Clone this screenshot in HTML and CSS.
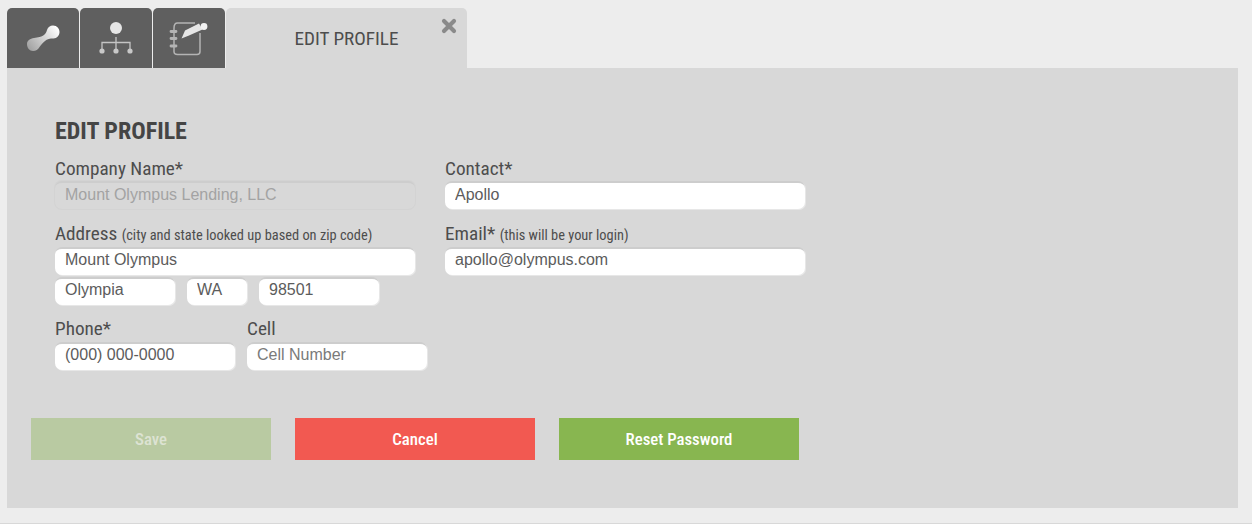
FILE: index.html
```html
<!DOCTYPE html>
<html lang="en">
<head>
    <meta charset="UTF-8">
    <title>Edit Profile</title>
    <link rel="stylesheet" href="styles.css">
</head>
<body>
    <div class="tabs">
        <div class="tab icon-tab">
            <svg width="72" height="60" viewBox="0 0 72 60">
                <defs>
                    <linearGradient id="blob" gradientUnits="userSpaceOnUse" x1="22" y1="42" x2="50" y2="20">
                        <stop offset="0" stop-color="#a0a0a0"/>
                        <stop offset="1" stop-color="#ffffff"/>
                    </linearGradient>
                </defs>
                <path d="M20 36 C20 32.500 23 30.500 27 30 C31 29.500 34.500 29 37 27 C39 25 39.500 24 40 22 C41 19 43 17.500 46 17.500 C50 17.500 52.500 20.500 52.500 24 C52.500 27.500 50 30.500 46.500 30.500 C43 30.500 40 31 38 33 C35.500 35 34 37 32.500 39 C31 41.500 29 43 26 43 C22.500 43 20 40 20 36 Z" fill="url(#blob)"/>
            </svg>
        </div>
        <div class="tab icon-tab">
            <svg width="72" height="60" viewBox="0 0 72 60">
                <circle cx="36" cy="20" r="6" fill="#e6e6e6"/>
                <path d="M36 29 V43 M22 43 V34.500 H50 V43" fill="none" stroke="#c4c4c4" stroke-width="1.300"/>
                <circle cx="22" cy="43" r="2.600" fill="#c8c8c8"/>
                <circle cx="36" cy="43" r="2.600" fill="#c8c8c8"/>
                <circle cx="50" cy="43" r="2.600" fill="#c8c8c8"/>
            </svg>
        </div>
        <div class="tab icon-tab">
            <svg width="72" height="60" viewBox="0 0 72 60">
                <path d="M21 20 C21 16.500 22 15 24.500 15 H42 M47 25 V43.500 C47 45.500 46 46.500 44 46.500 H24.500 C22 46.500 21 45.500 21 43.500 V20" fill="none" stroke="#b4b4b4" stroke-width="1.500"/>
                <path d="M18 23.500 H23 M18 30.500 H23 M18 38 H23" stroke="#b4b4b4" stroke-width="2.800" stroke-linecap="round"/>
                <path d="M28.500 30.500 L32 22.500 L46 15.500 L49.500 21.500 L36 27.500 Z" fill="#e6e6e6"/>
                <circle cx="51" cy="18.500" r="3.400" fill="#f2f2f2"/>
            </svg>
        </div>
        <div class="tab active-tab">
            <span>EDIT PROFILE</span>
            <svg class="close" width="16" height="16" viewBox="0 0 16 16">
                <path d="M3 3 L13 13 M13 3 L3 13" stroke="#8a8a8a" stroke-width="4.200" stroke-linecap="round"/>
            </svg>
        </div>
    </div>

    <div class="panel">
        <h1>EDIT PROFILE</h1>
        <div class="columns">
            <div class="col">
                <div class="field first">
                    <label>Company Name*</label>
                    <input class="wide disabled" type="text" value="Mount Olympus Lending, LLC" disabled>
                </div>
                <div class="field address">
                    <label>Address <small>(city and state looked up based on zip code)</small></label>
                    <input class="wide" type="text" value="Mount Olympus">
                    <div class="row">
                        <input class="city" type="text" value="Olympia">
                        <input class="state" type="text" value="WA">
                        <input class="zip" type="text" value="98501">
                    </div>
                </div>
                <div class="row">
                    <div class="field">
                        <label>Phone*</label>
                        <input class="phone" type="text" value="(000) 000-0000">
                    </div>
                    <div class="field">
                        <label>Cell</label>
                        <input class="phone" type="text" placeholder="Cell Number">
                    </div>
                </div>
            </div>
            <div class="col">
                <div class="field first">
                    <label>Contact*</label>
                    <input class="wide" type="text" value="Apollo">
                </div>
                <div class="field">
                    <label>Email* <small>(this will be your login)</small></label>
                    <input class="wide" type="text" value="apollo@olympus.com">
                </div>
            </div>
        </div>
        <div class="buttons">
            <button class="save" disabled>Save</button>
            <button class="cancel">Cancel</button>
            <button class="reset">Reset Password</button>
        </div>
    </div>
    <div class="bottom-line"></div>
</body>
</html>
```

FILE: styles.css
```css
html, body {
    margin: 0;
    padding: 0;
}
body {
    background: #ededed;
    height: 524px;
    overflow: hidden;
    font-family: Roboto, "Liberation Sans", sans-serif;
    font-stretch: 75%;
    color: #4a4a4a;
}
.tabs {
    display: flex;
    gap: 1px;
    padding: 8px 0 0 7px;
    height: 60px;
}
.tab {
    width: 72px;
    height: 60px;
    border-radius: 5px 5px 0 0;
}
.icon-tab {
    background: #5f5f5f;
}
.active-tab {
    position: relative;
    width: 241px;
    background: #d8d8d8;
    display: flex;
    align-items: center;
    justify-content: center;
    font-size: 19.2px;
    color: #4d4d4d;
}
.close {
    position: absolute;
    top: 10px;
    right: 10px;
}
.panel {
    margin-left: 7px;
    width: 1231px;
    height: 440px;
    box-sizing: border-box;
    background: #d8d8d8;
    padding: 50px 24px 0;
}
h1 {
    margin: 0 0 12px 24px;
    font-size: 24px;
    line-height: 27px;
    font-weight: 700;
    color: #454545;
}
.columns {
    display: flex;
    padding-left: 24px;
    gap: 30px;
}
.col {
    width: 360px;
}
.field {
    margin-bottom: 13px;
}
.address {
    margin-bottom: 12px;
}
label {
    display: block;
    margin-bottom: 2px;
    font-size: 19.2px;
    line-height: 23px;
    color: #4d4d4d;
    white-space: nowrap;
}
.first label {
    margin-bottom: 1px;
}
small {
    font-size: 14.4px;
    line-height: 1;
}
input {
    display: block;
    box-sizing: border-box;
    height: 28px;
    padding: 0 10px 4px;
    border: 0;
    border-top: 2px solid #cdcdcd;
    border-radius: 7px;
    background: #fff;
    box-shadow: 1px 1px 0 rgba(255,255,255,0.4);
    font-family: "Liberation Sans", Arial, sans-serif;
    font-stretch: normal;
    font-size: 16px;
    color: #5c5c5c;
    outline: none;
}
.first input {
    padding-bottom: 2px;
}
input::placeholder {
    color: #7a7a7a;
    opacity: 1;
}
.wide {
    width: 360px;
}
.disabled {
    background: #d8d8d8;
    color: #a3a3a3;
    box-shadow: 0 0 0 1px #d3d3d3;
}
.row {
    display: flex;
    gap: 12px;
}
.field .row {
    margin-top: 2px;
}
.city, .zip {
    width: 120px;
}
.state {
    width: 60px;
}
.phone {
    width: 180px;
}
.buttons {
    display: flex;
    gap: 24px;
    margin-top: 35px;
}
button {
    width: 240px;
    height: 42px;
    border: 0;
    padding: 0;
    font-family: Roboto, "Liberation Sans", sans-serif;
    font-stretch: 75%;
    font-size: 16.8px;
    font-weight: 500;
    color: #fff;
}
.save {
    background: #b9caa2;
    color: #dde3d3;
}
.cancel {
    background: #f25951;
}
.reset {
    background: #88b650;
}
.bottom-line {
    height: 1px;
    margin-top: 15px;
    background: #d8d8d8;
}
```
